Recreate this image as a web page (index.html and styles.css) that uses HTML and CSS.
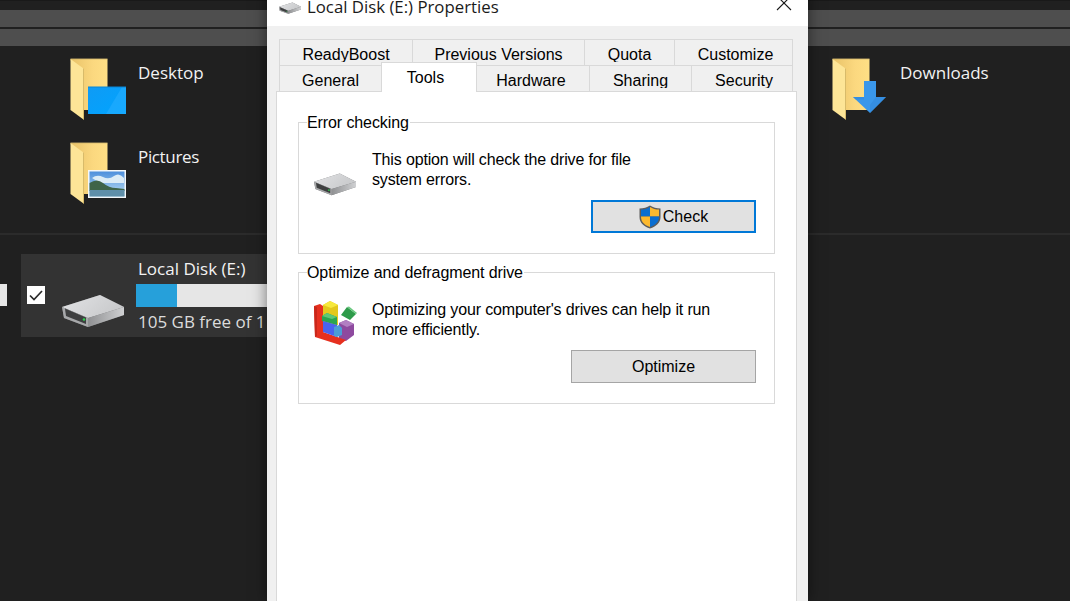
FILE: index.html
```html
<!DOCTYPE html>
<html lang="en">
<head>
<meta charset="UTF-8">
<title>Local Disk (E:) Properties</title>
<link rel="stylesheet" href="styles.css">
</head>
<body>

<!-- shared icons -->
<svg class="icon-defs" aria-hidden="true">
  <defs>
    <linearGradient id="folder-back" x1="0" x2="1" y1="0" y2="0">
      <stop offset="0" stop-color="#e8c268"/>
      <stop offset="0.6" stop-color="#fbd87f"/>
      <stop offset="1" stop-color="#ffdf85"/>
    </linearGradient>
    <linearGradient id="drive-top" x1="0" x2="1" y1="0" y2="0.4">
      <stop offset="0" stop-color="#e2e3e5"/>
      <stop offset="1" stop-color="#c9cacc"/>
    </linearGradient>
    <linearGradient id="drive-side" x1="0" x2="1" y1="0" y2="0">
      <stop offset="0" stop-color="#8f9092"/>
      <stop offset="1" stop-color="#d0d1d3"/>
    </linearGradient>
    <linearGradient id="screen-blue" x1="0" x2="1" y1="0" y2="1">
      <stop offset="0" stop-color="#0f9bf5"/>
      <stop offset="1" stop-color="#00a4ff"/>
    </linearGradient>
    <linearGradient id="photo-sky" x1="0" x2="0" y1="0" y2="1">
      <stop offset="0" stop-color="#4d8fdc"/>
      <stop offset="1" stop-color="#bfe0f2"/>
    </linearGradient>

    <symbol id="folder" viewBox="0 0 38 62">
      <path d="M0.5 1H37.5V52H14V62Z" fill="url(#folder-back)"/>
      <path d="M0.5 0.5H37.5V1.2H0.5Z" fill="#b9a263"/>
      <path d="M0.5 1L13.5 10.5V61.5L0.5 52Z" fill="#fde597"/>
      <path d="M13.5 10.5V61.5" stroke="#d8bb6a" stroke-width="1"/>
    </symbol>

    <symbol id="drive" viewBox="0 0 62 33">
      <path d="M0 13L38 1L62 13L62 21L26 33L2 24Z" fill="#77787a"/>
      <path d="M0 13L38 1L62 13L26 24Z" fill="url(#drive-top)"/>
      <path d="M26 24L62 13V21L26 33Z" fill="url(#drive-side)"/>
      <path d="M0 13L26 24V33L2 24Z" fill="#a7a8aa"/>
      <path d="M3 14.5L24 23.5V30L4 22Z" fill="#3e3f40"/>
      <circle cx="22" cy="25.5" r="1.3" fill="#2fd14f"/>
    </symbol>
  </defs>
</svg>

<div class="desktop">
  <div class="address-bars">
    <div class="address-bar"></div>
    <div class="address-bar"></div>
  </div>

  <div class="folders">
    <div class="folder-item">
      <div class="folder-icon">
        <svg width="56" height="62" viewBox="0 0 56 62">
          <use href="#folder" width="38" height="62"/>
          <rect x="18" y="29" width="38" height="27" fill="url(#screen-blue)"/>
          <path d="M36 56L52 29H56V56Z" fill="#2cb0ff" opacity="0.5"/>
          <path d="M18 29H56" stroke="#0a86d4"/>
        </svg>
      </div>
      <span class="folder-name">Desktop</span>
    </div>
    <div class="folder-item">
      <div class="folder-icon">
        <svg width="56" height="62" viewBox="0 0 56 62">
          <use href="#folder" width="38" height="62"/>
          <rect x="18" y="28" width="38" height="28" fill="#f4f7f9"/>
          <rect x="19.5" y="29.5" width="35" height="25" fill="url(#photo-sky)"/>
          <path d="M22 36Q27 32 33 35T44 34T54 36V41H30Z" fill="#dcecf6"/>
          <path d="M19.5 41Q27 36 33 41T46 46L54.5 47V49H19.5Z" fill="#3f6448"/>
          <rect x="19.5" y="48" width="35" height="6.5" fill="#5f8fa9"/>
        </svg>
      </div>
      <span class="folder-name folder-name-tight">Pictures</span>
    </div>
    <div class="folder-item folder-right">
      <div class="folder-icon">
        <svg width="56" height="62" viewBox="0 0 56 62">
          <use href="#folder" width="38" height="62"/>
          <path d="M32 23H44V39H54L38 55L21 39H32Z" fill="#3a97ea"/>
          <path d="M21 39H32V41.5H23.5ZM38 55L54 39H44L38 47Z" fill="#2f86d8" opacity="0.5"/>
        </svg>
      </div>
      <span class="folder-name">Downloads</span>
    </div>
  </div>

  <div class="section-line"></div>

  <div class="drives">
    <div class="prev-bar"></div>
    <div class="drive-tile">
      <span class="tile-check">
        <svg width="18" height="18" viewBox="0 0 18 18"><path d="M3 9.5L7 13.5L15 5" fill="none" stroke="#2b2b2b" stroke-width="1.7"/></svg>
      </span>
      <svg class="tile-drive" width="62" height="33"><use href="#drive"/></svg>
      <div class="tile-info">
        <div class="tile-name">Local Disk (E:)</div>
        <div class="tile-bar"><div class="tile-used"></div></div>
        <div class="tile-free">105 GB free of 1</div>
      </div>
    </div>
  </div>
</div>

<div class="dialog">
  <div class="dialog-title">
    <svg class="title-icon" width="22" height="12"><use href="#drive"/></svg>
    <span class="title-text">Local Disk (E:) Properties</span>
    <svg class="title-close" width="16" height="16" viewBox="0 0 16 16"><path d="M1 1L15 15M15 1L1 15" stroke="#1a1a1a" stroke-width="1.1"/></svg>
  </div>

  <div class="dialog-body">
    <div class="tab-row">
      <div class="tab tab-readyboost"><span>ReadyBoost</span></div>
      <div class="tab tab-versions"><span>Previous Versions</span></div>
      <div class="tab tab-quota"><span>Quota</span></div>
      <div class="tab tab-customize"><span>Customize</span></div>
    </div>
    <div class="tab-row">
      <div class="tab tab-general"><span>General</span></div>
      <div class="tab tab-tools"><span>Tools</span></div>
      <div class="tab tab-hardware"><span>Hardware</span></div>
      <div class="tab tab-sharing"><span>Sharing</span></div>
      <div class="tab tab-security"><span>Security</span></div>
    </div>

    <div class="tab-panel">
      <fieldset class="group">
        <legend>Error checking</legend>
        <div class="group-row">
          <svg class="group-icon icon-small-drive" width="42" height="24"><use href="#drive"/></svg>
          <p>This option will check the drive for file<br>system errors.</p>
        </div>
        <div class="group-actions">
          <button type="button" class="btn btn-check">
            <svg width="22" height="24" viewBox="0 0 22 24">
              <path d="M11 0.5C8 2.5 4.5 3.5 0.5 3.5V12C0.5 18 5 21.5 11 23.5C17 21.5 21.5 18 21.5 12V3.5C17.5 3.5 14 2.5 11 0.5Z" fill="#5d5d5d"/>
              <path d="M11 2V11.5H2V4.6C5.5 4.6 8.5 3.6 11 2Z" fill="#0a6ed1"/>
              <path d="M11 2C13.5 3.6 16.5 4.6 20 4.6V11.5H11Z" fill="#fdb92e"/>
              <path d="M2 11.5H11V22C6 20.2 2 17.2 2 12Z" fill="#fdb92e"/>
              <path d="M11 11.5H20V12C20 17.2 16 20.2 11 22Z" fill="#0a6ed1"/>
            </svg>
            <span>Check</span>
          </button>
        </div>
      </fieldset>

      <fieldset class="group">
        <legend>Optimize and defragment drive</legend>
        <div class="group-row">
          <svg class="group-icon icon-defrag" width="44" height="45" viewBox="0 0 44 45">
            <path d="M10 4L17 0L25 4V24H10Z" fill="#e4c81c"/>
            <path d="M10 4L17 0L25 4L18 7Z" fill="#f7e93c"/>
            <path d="M26 22L33 19L41 23V34L33 40L26 38Z" fill="#8e4a9f"/>
            <path d="M26 22L33 19L41 23L34 26Z" fill="#b27fc2"/>
            <path d="M1 5L7 3L10 5V31L33 39L27 44L2 36Z" fill="#e6301f"/>
            <path d="M1 5L4 6V35L2 36Z" fill="#c9271a"/>
            <path d="M9 15L14 12L24 16V24L9 20Z" fill="#2aa54f"/>
            <path d="M9 15L14 12L24 16L19 18Z" fill="#5fc777"/>
            <path d="M10 20L24 24V36L10 31Z" fill="#4a63ee"/>
            <path d="M21 26L26 24L29 27V34L24 36L21 35Z" fill="#4c9dd6"/>
            <path d="M28 14L34 6L43 13L37 19Z" fill="#2e9b4a"/>
            <path d="M34 6L36 5.5L44 12L43 13Z" fill="#66c77c"/>
          </svg>
          <p>Optimizing your computer's drives can help it run<br>more efficiently.</p>
        </div>
        <div class="group-actions">
          <button type="button" class="btn btn-optimize">Optimize</button>
        </div>
      </fieldset>
    </div>
  </div>
</div>

</body>
</html>
```

FILE: styles.css
```css
html, body {
  margin: 0;
  height: 100%;
  overflow: hidden;
  background: #202020;
}
.icon-defs {
  position: absolute;
  width: 0;
  height: 0;
}

/* explorer behind the dialog */
.desktop {
  height: 601px;
  overflow: hidden;
  font-family: "Open Sans", "Noto Sans", sans-serif;
  font-size: 17px;
  color: #f2f2f2;
  border-top: 1px solid #191919;
  box-sizing: border-box;
}
.address-bars {
  padding-top: 9px;
}
.address-bar {
  height: 17px;
  margin-bottom: 2px;
  background: #4e4e4e;
}
.folders {
  display: grid;
  grid-template-columns: 762px 1fr;
  grid-auto-rows: 84px;
  padding: 10px 0 0 70px;
  height: 185px;
  box-sizing: border-box;
}
.folder-item {
  display: flex;
  gap: 12px;
}
.folder-right {
  grid-column: 2;
  grid-row: 1;
}
.folder-item:nth-child(2) {
  grid-column: 1;
  grid-row: 2;
}
.folder-icon {
  width: 56px;
  height: 62px;
}
.folder-name {
  line-height: 30px;
}
.folder-name-tight {
  letter-spacing: -0.35px;
}
.section-line {
  height: 2px;
  background: #2b2b2b;
}
.drives {
  display: flex;
  align-items: flex-start;
  padding-top: 19px;
}
.prev-bar {
  width: 7px;
  height: 22px;
  margin-top: 30px;
  background: #e6e6e6;
  flex: none;
}
.drive-tile {
  flex: none;
  display: flex;
  align-items: flex-start;
  width: 400px;
  height: 83px;
  margin-left: 14px;
  background: #333333;
}
.tile-check {
  width: 18px;
  height: 18px;
  margin: 32px 0 0 6px;
  background: #fff;
  display: block;
}
.tile-check svg {
  display: block;
}
.tile-drive {
  margin: 40px 0 0 17px;
}
.tile-info {
  margin-left: 12px;
  width: 220px;
}
.tile-name {
  line-height: 30px;
  padding-left: 2px;
}
.tile-bar {
  height: 23px;
  background: #e6e6e6;
}
.tile-used {
  width: 41px;
  height: 100%;
  background: #26a0da;
}
.tile-free {
  line-height: 30px;
  padding-left: 2px;
  color: #dcdcdc;
}

/* properties dialog */
.dialog {
  position: absolute;
  left: 267px;
  top: -10px;
  width: 541px;
  height: 611px;
  background: #f0f0f0;
  box-shadow: 0 0 14px rgba(0, 0, 0, 0.5);
  color: #000;
  font-family: "Liberation Sans", Arial, sans-serif;
  font-size: 16px;
}
.dialog-title {
  display: flex;
  align-items: center;
  height: 36px;
  padding-left: 12px;
  background: #fff;
  font-family: "Open Sans", "Noto Sans", sans-serif;
  font-size: 16.8px;
  color: #1a1a1a;
}
.title-icon {
  margin-right: 6px;
}
.title-text {
  margin-bottom: 4px;
}
.title-close {
  margin-left: auto;
  margin-right: 16px;
  margin-bottom: 10px;
}
.dialog-body {
  padding: 13px 0 0 9px;
}
.tab-row {
  display: flex;
  align-items: flex-start;
  height: 26px;
  padding-left: 3px;
}
.tab {
  position: relative;
  box-sizing: border-box;
  height: 26px;
  margin-right: -1px;
  border: 1px solid #d9d9d9;
  border-bottom: 0;
  background: #f0f0f0;
  text-align: center;
  flex: none;
}
/* the old tab strip cuts off descenders a few px above the row end */
.tab span {
  display: block;
  height: 22px;
  overflow: hidden;
  line-height: 29px;
}
.tab-readyboost { width: 134px; }
.tab-versions { width: 173px; }
.tab-quota { width: 91px; }
.tab-customize { width: 119px; padding-left: 4px; }
.tab-general { width: 103px; }
.tab-hardware { width: 113px; padding-right: 4px; border-left: 0; }
.tab-sharing { width: 103px; }
.tab-security { width: 102px; padding-left: 4px; }
.tab-tools {
  z-index: 2;
  width: 96px;
  height: 30px;
  margin-top: -3px;
  margin-right: 0;
  padding-right: 7px;
  background: #fff;
}
.tab-tools span {
  height: 29px;
}
.tab-panel {
  box-sizing: border-box;
  width: 521px;
  height: 510px;
  padding: 19px 0 0 21px;
  border: 1px solid #d9d9d9;
  border-bottom: 0;
  background: #fff;
}
.group {
  box-sizing: border-box;
  width: 477px;
  height: 143px;
  margin: 0 0 7px;
  padding: 17px 18px 0 8px;
  border: 1px solid #d9d9d9;
}
.group legend {
  padding: 2px 1px 0 0;
  line-height: 20px;
  letter-spacing: -0.1px;
}
.group-row {
  display: flex;
  align-items: flex-start;
  padding-left: 7px;
}
.group-row p {
  margin: 0;
  line-height: 20px;
  letter-spacing: -0.15px;
}
.group-icon {
  flex: none;
}
.icon-small-drive {
  margin: 22px 16px 0 0;
}
.icon-defrag {
  margin: 1px 15px 0 -1px;
}
.group-actions {
  display: flex;
  justify-content: flex-end;
  margin-top: 4px;
}
.btn {
  display: flex;
  align-items: center;
  justify-content: center;
  box-sizing: border-box;
  height: 33px;
  padding: 0;
  background: #e1e1e1;
  color: #000;
  font: inherit;
}
.btn-check {
  width: 165px;
  border: 2px solid #0078d7;
  gap: 2px;
}
.btn-optimize {
  width: 185px;
  border: 1px solid #a5a5a5;
}
```
